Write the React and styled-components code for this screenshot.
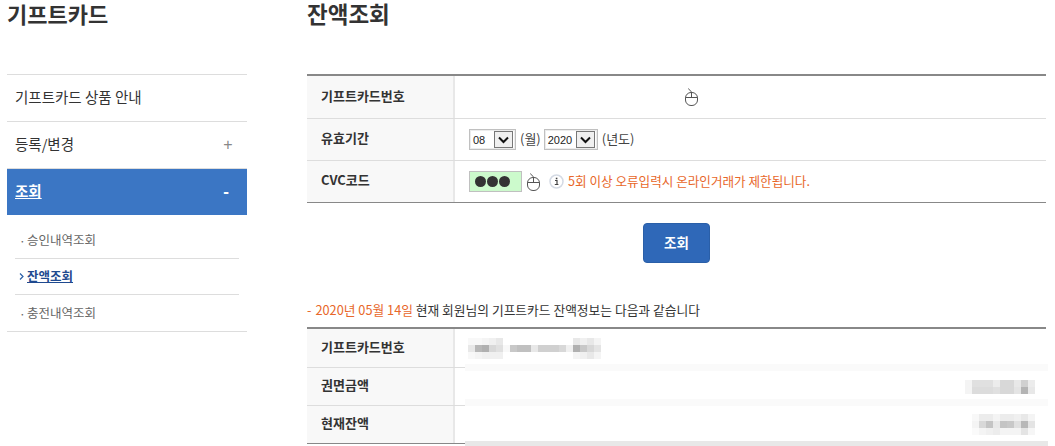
import React from 'react';
import styled, { createGlobalStyle } from 'styled-components';

const GlobalStyle = createGlobalStyle`
  html, body {
    margin: 0;
    background: #fff;
    font-family: "Noto Sans CJK KR", "Liberation Sans", sans-serif;
    color: #333;
  }
`;

const Page = styled.div`
  width: 1055px;
  height: 446px;
  overflow: hidden;
  box-sizing: border-box;
  padding-left: 7px;
  display: flex;
  gap: 60px;
`;

const Sidebar = styled.aside`
  width: 240px;
  flex: none;
`;

const Main = styled.main`
  width: 739px;
  flex: none;
`;

const PageTitle = styled.h1`
  height: 74px;
  margin: 0;
  font-family: "Liberation Sans", "Noto Sans CJK KR", sans-serif;
  font-size: ${(p) => p.$size}px;
  line-height: 32px;
  font-weight: 700;
  color: #333;
  box-sizing: border-box;
`;

const MenuItem = styled.div`
  height: 47px;
  box-sizing: border-box;
  border-top: 1px solid #ddd;
  padding: 0 ${(p) => (p.$active ? '15px' : '13px')} 0 8px;
  display: flex;
  align-items: center;
  justify-content: space-between;
  font-size: 14.5px;
  color: ${(p) => (p.$active ? '#fff' : '#333')};
  background: ${(p) => (p.$active ? '#3b76c4' : '#fff')};
  font-weight: ${(p) => (p.$active ? 700 : 400)};
`;

const MenuLabel = styled.span`
  margin-bottom: 4px;
  text-decoration: ${(p) => (p.$active ? 'underline' : 'none')};
`;

const MenuSign = styled.span`
  font-family: "Liberation Sans", sans-serif;
  font-size: ${(p) => (p.$active ? '17px' : '16px')};
  font-weight: ${(p) => (p.$active ? 700 : 400)};
  color: ${(p) => (p.$active ? '#fff' : '#888')};
  width: 12px;
  text-align: center;
`;

const SubList = styled.ul`
  list-style: none;
  margin: 0;
  padding: 8px 8px 0;
  border-bottom: 1px solid #ddd;
`;

const SubItem = styled.li`
  height: 36px;
  box-sizing: border-box;
  border-bottom: ${(p) => (p.$last ? '0' : '1px solid #ddd')};
  display: flex;
  align-items: center;
  font-size: 12.5px;
  color: ${(p) => (p.$active ? '#1f4a8f' : '#666')};
  font-weight: ${(p) => (p.$active ? 700 : 400)};
`;

const SubMark = styled.span`
  width: 12px;
  flex: none;
  padding-left: 4px;
  box-sizing: border-box;
  display: flex;
  align-items: center;
  font-size: 12px;
`;

const SubLabel = styled.span`
  margin-bottom: 2px;
  text-decoration: ${(p) => (p.$active ? 'underline' : 'none')};
`;

const Table = styled.div`
  border-top: 2px solid #888;
  border-bottom: 1px solid #888;
`;

const Row = styled.div`
  display: flex;
  height: ${(p) => p.$height}px;
  box-sizing: border-box;
  border-bottom: ${(p) => (p.$last ? '0' : '1px solid #ddd')};
`;

const Head = styled.div`
  width: 148px;
  flex: none;
  box-sizing: border-box;
  background: #f8f8f8;
  border-right: 2px solid #e8e8e8;
  padding: 0 0 4px 14px;
  display: flex;
  align-items: center;
  font-size: 13px;
  font-weight: 700;
  color: #333;
`;

const Cell = styled.div`
  flex: 1;
  min-width: 0;
  display: flex;
  align-items: center;
  justify-content: ${(p) => (p.$end ? 'flex-end' : 'flex-start')};
  padding: ${(p) => (p.$end ? '0 11px 0 0' : '0 0 0 14px')};
  font-size: 13px;
  color: #444;
  position: relative;
`;

const CursorSlot = styled.span`
  display: flex;
  margin-left: 216px;
`;

const SelectBox = styled.span`
  height: 21px;
  width: ${(p) => p.$width}px;
  box-sizing: border-box;
  border: 1px solid #c0c0c0;
  box-shadow: inset 0 0 0 1px #ececec;
  display: flex;
  align-items: center;
  justify-content: space-between;
  padding: 0 2px 0 3px;
  font-family: "Liberation Sans", sans-serif;
  font-size: 11px;
  color: #222;
  background: #fff;
`;

const SelectArrow = styled.span`
  width: 19px;
  height: 17px;
  box-sizing: border-box;
  border: 1px solid #777;
  background: #f0f0f0;
  display: flex;
  align-items: center;
  justify-content: center;
`;

const Unit = styled.span`
  margin: 0 3px 2px 4px;
  font-size: 13px;
  color: #444;
`;

const CvcInput = styled.span`
  width: 53px;
  height: 21px;
  box-sizing: border-box;
  background: #ccfacc;
  border: 1px solid #c0c0c0;
  padding-left: 5px;
  display: flex;
  align-items: center;
  gap: 1px;
`;

const Dot = styled.i`
  width: 11px;
  height: 11px;
  border-radius: 50%;
  background: #333;
`;

const Warning = styled.span`
  margin: 0 0 2px 4px;
  font-size: 12.6px;
  color: #e8672a;
`;

const IconGap = styled.span`
  display: flex;
  margin-left: ${(p) => p.$left}px;
`;

const ButtonRow = styled.div`
  display: flex;
  justify-content: center;
  padding-top: 20px;
`;

const SearchButton = styled.button`
  width: 67px;
  height: 40px;
  padding: 0 0 3px;
  border: 1px solid #2a5fa8;
  border-radius: 4px;
  background: #2f68b8;
  color: #fff;
  font-family: inherit;
  font-size: 13.5px;
  font-weight: 700;
`;

const Notice = styled.p`
  margin: 37px 0 0;
  height: 27px;
  font-size: 12.75px;
  line-height: 20px;
  color: #333;
`;

const NoticeDash = styled.span`
  color: #e8672a;
  margin-right: 4px;
`;

const Accent = styled.span`
  color: #e8672a;
`;

const Band = styled.span`
  position: absolute;
  left: 10px;
  right: -2px;
  top: ${(p) => p.$top}px;
  height: ${(p) => p.$height}px;
  background: ${(p) => p.$color};
`;

const MouseIcon = () => (
  <svg width="13" height="18" viewBox="0 0 13 18" fill="none" stroke="#555" strokeWidth="1">
    <rect x="0.5" y="4.5" width="12" height="13" rx="5.5" fill="#fff" />
    <path d="M1 9.5h11M6.5 4.5v5M6.5 4.5C6.5 2.5 4 2.5 3.5 .5" />
  </svg>
);

const InfoIcon = () => (
  <svg width="15" height="15" viewBox="0 0 15 15">
    <circle cx="7.5" cy="7.5" r="6.5" fill="#fff" stroke="#d4dae4" strokeWidth="1.5" />
    <path d="M6 6.5h2v4M5.8 10.5h3.6" fill="none" stroke="#444" strokeWidth="1.2" />
    <rect x="6.8" y="3.7" width="1.6" height="1.6" fill="#444" />
  </svg>
);

const ChevronDown = () => (
  <svg width="11" height="8" viewBox="0 0 11 8" fill="none" stroke="#111" strokeWidth="2">
    <path d="M1 1.5l4.5 4.5 4.5-4.5" />
  </svg>
);

const SmallChevron = () => (
  <svg width="5" height="7" viewBox="0 0 5 7" fill="none" stroke="#2a5fa8" strokeWidth="1.2">
    <path d="M1 .5l3 3-3 3" />
  </svg>
);

// blurred values, one string per row, two hex digits of grey per 7px cell
const Mosaic = ({ rows }) => (
  <svg width={(rows[0].length / 2) * 7} height={rows.length * 7} shapeRendering="crispEdges">
    {rows.map((row, y) =>
      row.match(/../g).map((grey, x) => (
        <rect key={x} x={x * 7} y={y * 7} width="7" height="7" fill={`#${grey}${grey}${grey}`} />
      ))
    )}
  </svg>
);

const cardMosaic = [
  'f8f8f4f0e8ffffffffffffffffffffe8f0e8f4',
  'e8b8b0d8e0f8c8c0c0e8d0d0d0d8f0b0c8d8e4',
  'f8f4f0f0f0fffffffffffffffffffff4f0e8f4',
];

const faceMosaic = [
  'f4e0e0e0ecd8d8e8d0ec',
  'f4dcdcdce0d8d8e4b4e8',
];

const balanceMosaic = [
  'f8ececf4ececf0e8f4',
  'f4d8c4e8c4c8e0b8e4',
  'faf4f0ecf4f4f4e4f6',
];

function App() {
  return (
    <Page>
      <GlobalStyle />
      <Sidebar>
        <PageTitle $size={22}>기프트카드</PageTitle>
        <MenuItem>
          <MenuLabel>기프트카드 상품 안내</MenuLabel>
        </MenuItem>
        <MenuItem>
          <MenuLabel>등록/변경</MenuLabel>
          <MenuSign>+</MenuSign>
        </MenuItem>
        <MenuItem $active>
          <MenuLabel $active>조회</MenuLabel>
          <MenuSign $active>-</MenuSign>
        </MenuItem>
        <SubList>
          <SubItem>
            <SubMark>·</SubMark>
            <SubLabel>승인내역조회</SubLabel>
          </SubItem>
          <SubItem $active>
            <SubMark><SmallChevron /></SubMark>
            <SubLabel $active>잔액조회</SubLabel>
          </SubItem>
          <SubItem $last>
            <SubMark>·</SubMark>
            <SubLabel>충전내역조회</SubLabel>
          </SubItem>
        </SubList>
      </Sidebar>
      <Main>
        <PageTitle $size={22.5}>잔액조회</PageTitle>
        <Table>
          <Row $height={43}>
            <Head>기프트카드번호</Head>
            <Cell>
              <CursorSlot><MouseIcon /></CursorSlot>
            </Cell>
          </Row>
          <Row $height={42}>
            <Head>유효기간</Head>
            <Cell>
              <SelectBox $width={47}>
                08
                <SelectArrow><ChevronDown /></SelectArrow>
              </SelectBox>
              <Unit>(월)</Unit>
              <SelectBox $width={54}>
                2020
                <SelectArrow><ChevronDown /></SelectArrow>
              </SelectBox>
              <Unit>(년도)</Unit>
            </Cell>
          </Row>
          <Row $height={41} $last>
            <Head>CVC코드</Head>
            <Cell>
              <CvcInput>
                <Dot />
                <Dot />
                <Dot />
              </CvcInput>
              <IconGap $left={5}><MouseIcon /></IconGap>
              <IconGap $left={9}><InfoIcon /></IconGap>
              <Warning>5회 이상 오류입력시 온라인거래가 제한됩니다.</Warning>
            </Cell>
          </Row>
        </Table>
        <ButtonRow>
          <SearchButton type="button">조회</SearchButton>
        </ButtonRow>
        <Notice>
          <NoticeDash>-</NoticeDash>
          <Accent>2020년 05월 14일</Accent> 현재 회원님의 기프트카드 잔액정보는 다음과 같습니다
        </Notice>
        <Table>
          <Row $height={39}>
            <Head>기프트카드번호</Head>
            <Cell>
              <IconGap $left={-1}><Mosaic rows={cardMosaic} /></IconGap>
              <Band $top={35} $height={7} $color="#fafafa" />
            </Cell>
          </Row>
          <Row $height={38}>
            <Head>권면금액</Head>
            <Cell $end>
              <Mosaic rows={faceMosaic} />
              <Band $top={31} $height={7} $color="#fafafa" />
            </Cell>
          </Row>
          <Row $height={37} $last>
            <Head>현재잔액</Head>
            <Cell $end>
              <Mosaic rows={balanceMosaic} />
              <Band $top={35} $height={5} $color="#e8e8e8" />
            </Cell>
          </Row>
        </Table>
      </Main>
    </Page>
  );
}

export default App;
